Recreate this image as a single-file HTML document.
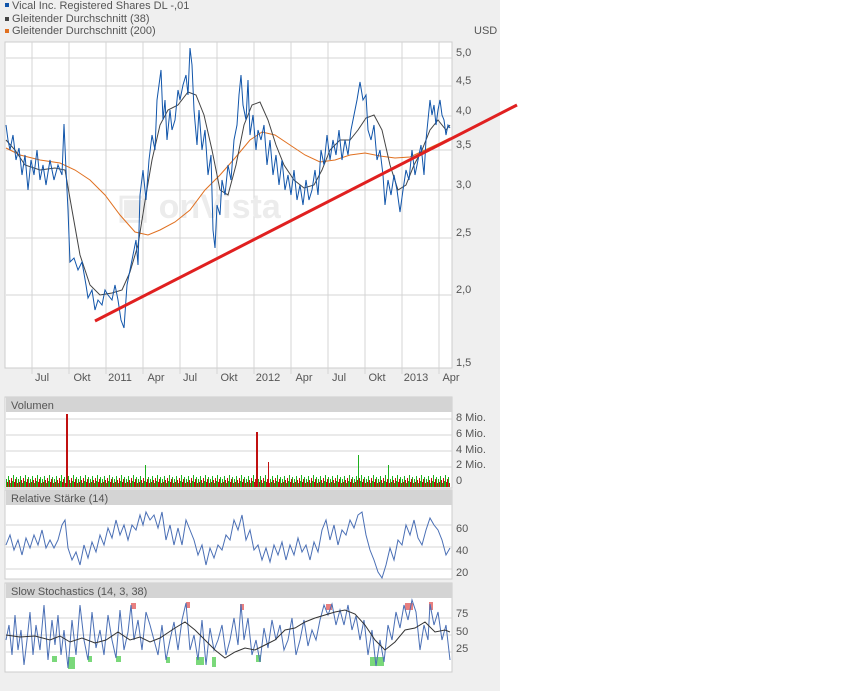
<!DOCTYPE html>
<html><head><meta charset="utf-8"><style>
body{margin:0;width:850px;height:691px;background:#fff;font-family:"Liberation Sans",sans-serif;overflow:hidden}
#g{position:absolute;left:0;top:0;width:500px;height:691px;background:#efefef}
svg{position:absolute;left:0;top:0}
text{font-family:"Liberation Sans",sans-serif;font-size:11px;fill:#555}
</style></head><body>
<div id="g"></div>
<svg width="850" height="691">
<defs>
<pattern id="vb" x="6" y="0" width="12" height="487" patternUnits="userSpaceOnUse">
<rect x="0" y="479" width="1" height="8" fill="#1db01d"/><rect x="1" y="482" width="1" height="5" fill="#c01010"/>
<rect x="2" y="476" width="1" height="11" fill="#1db01d"/><rect x="3" y="480" width="1" height="7" fill="#c01010"/>
<rect x="4" y="483" width="1" height="4" fill="#1db01d"/><rect x="5" y="478" width="1" height="9" fill="#c01010"/>
<rect x="6" y="481" width="1" height="6" fill="#1db01d"/><rect x="7" y="475" width="1" height="12" fill="#1db01d"/>
<rect x="8" y="482" width="1" height="5" fill="#c01010"/><rect x="9" y="479" width="1" height="8" fill="#c01010"/>
<rect x="10" y="477" width="1" height="10" fill="#1db01d"/><rect x="11" y="483" width="1" height="4" fill="#c01010"/>
</pattern>
</defs>
<!-- legend -->
<rect x="5" y="3" width="4" height="4" fill="#1155aa"/><text x="12" y="9">Vical Inc. Registered Shares DL -,01</text>
<rect x="5" y="17" width="4" height="4" fill="#444"/><text x="12" y="22">Gleitender Durchschnitt (38)</text>
<rect x="5" y="29" width="4" height="4" fill="#e07020"/><text x="12" y="34">Gleitender Durchschnitt (200)</text>
<text x="474" y="34">USD</text>
<!-- main panel -->
<rect x="5" y="42" width="447" height="326" fill="#fff" stroke="#ccc"/>
<g stroke="#d4d4d4" stroke-width="1">
<line x1="6" y1="58" x2="452" y2="58"/><line x1="6" y1="86" x2="452" y2="86"/><line x1="6" y1="116" x2="452" y2="116"/><line x1="6" y1="150" x2="452" y2="150"/><line x1="6" y1="190" x2="452" y2="190"/><line x1="6" y1="238" x2="452" y2="238"/><line x1="6" y1="295" x2="452" y2="295"/>
<line x1="32" y1="42" x2="32" y2="374"/><line x1="69" y1="42" x2="69" y2="374"/><line x1="106" y1="42" x2="106" y2="374"/><line x1="143" y1="42" x2="143" y2="374"/><line x1="180" y1="42" x2="180" y2="374"/><line x1="217" y1="42" x2="217" y2="374"/><line x1="254" y1="42" x2="254" y2="374"/><line x1="291" y1="42" x2="291" y2="374"/><line x1="328" y1="42" x2="328" y2="374"/><line x1="365" y1="42" x2="365" y2="374"/><line x1="402" y1="42" x2="402" y2="374"/><line x1="439" y1="42" x2="439" y2="374"/>
</g>
<text x="117" y="218" style="font-size:34px;fill:#ececec;font-weight:bold">▣ onVista</text>
<g text-anchor="start">
<text x="456" y="56">5,0</text><text x="456" y="84">4,5</text><text x="456" y="114">4,0</text><text x="456" y="148">3,5</text><text x="456" y="188">3,0</text><text x="456" y="236">2,5</text><text x="456" y="293">2,0</text><text x="456" y="366">1,5</text>
</g>
<g text-anchor="middle">
<text x="42" y="381">Jul</text><text x="82" y="381">Okt</text><text x="120" y="381">2011</text><text x="156" y="381">Apr</text><text x="190" y="381">Jul</text><text x="229" y="381">Okt</text><text x="268" y="381">2012</text><text x="304" y="381">Apr</text><text x="339" y="381">Jul</text><text x="377" y="381">Okt</text><text x="416" y="381">2013</text><text x="451" y="381">Apr</text>
</g>
<polyline fill="none" stroke="#e07020" stroke-width="1" points="6,148 20,155 40,160 60,163 75,170 90,180 105,195 120,215 135,232 148,235 160,230 175,222 190,210 205,190 220,175 235,158 250,140 262,132 275,135 290,145 305,155 320,162 335,160 350,155 365,153 380,156 395,158 410,157 425,150 440,143 450,138"/>
<polyline fill="none" stroke="#444" stroke-width="1" points="6,140 15,150 25,165 40,170 55,168 65,170 72,210 80,255 90,285 100,295 112,293 122,290 130,272 138,245 146,195 152,160 160,125 168,110 178,105 188,92 196,95 204,115 212,150 220,190 228,195 236,165 244,125 252,105 260,102 268,120 276,145 284,165 294,180 304,188 314,185 322,170 330,150 340,140 350,140 358,130 366,118 374,115 382,130 390,165 398,190 406,185 414,165 422,150 430,130 438,120 446,130 450,125"/>
<polyline fill="none" stroke="#1155aa" stroke-width="1" points="6,125 8,140 10,150 13,135 16,160 19,148 22,175 25,155 28,190 31,160 34,175 37,150 40,180 43,165 46,185 50,160 54,180 58,165 62,175 64,124 66,170 68,210 70,262 74,258 78,270 82,262 86,285 88,298 92,290 95,310 98,300 102,305 105,290 108,295 112,300 115,285 118,300 121,320 124,328 127,285 130,270 133,255 136,240 138,265 140,195 143,170 146,200 149,160 152,135 155,150 157,100 159,85 161,70 163,120 165,100 167,140 170,110 172,130 175,120 178,90 180,100 183,85 186,75 188,95 190,48 192,65 194,110 197,145 199,110 202,150 205,130 208,175 211,155 213,230 215,248 217,205 220,215 222,180 225,195 228,165 231,180 234,140 237,125 239,95 241,75 243,105 246,120 248,80 250,135 253,115 256,150 258,130 261,140 264,125 267,165 270,140 273,175 276,155 279,185 282,160 285,190 288,175 291,195 294,170 297,200 300,185 303,205 306,180 309,200 312,190 315,170 318,195 321,150 324,165 327,135 330,160 333,140 336,155 339,130 342,160 345,140 348,155 351,130 354,115 357,100 360,82 363,100 366,95 368,130 371,140 374,125 377,160 380,150 383,175 385,205 388,180 391,195 394,175 397,190 400,212 403,190 406,170 409,180 412,150 415,175 418,160 421,145 424,175 426,140 428,120 430,100 432,115 434,105 436,125 438,110 440,100 442,115 444,120 446,135 448,125 450,128"/>
<line x1="95" y1="321" x2="517" y2="105" stroke="#e02020" stroke-width="3"/>
<!-- volume -->
<rect x="5" y="397" width="447" height="91" fill="#fff" stroke="#ccc"/>
<rect x="6" y="397" width="446" height="15" fill="#d4d4d4"/>
<text x="11" y="409">Volumen</text>
<g stroke="#d4d4d4"><line x1="6" y1="419" x2="452" y2="419"/><line x1="6" y1="435" x2="452" y2="435"/><line x1="6" y1="451" x2="452" y2="451"/><line x1="6" y1="467" x2="452" y2="467"/></g>
<rect x="6" y="470" width="444" height="17" fill="url(#vb)"/>
<rect x="66" y="414" width="2" height="73" fill="#c01010"/><rect x="256" y="432" width="2" height="55" fill="#c01010"/>
<rect x="358" y="455" width="1" height="32" fill="#1db01d"/><rect x="388" y="465" width="1" height="22" fill="#1db01d"/><rect x="145" y="465" width="1" height="22" fill="#1db01d"/><rect x="268" y="462" width="1" height="25" fill="#c01010"/>
<text x="456" y="421">8 Mio.</text><text x="456" y="437">6 Mio.</text><text x="456" y="453">4 Mio.</text><text x="456" y="468">2 Mio.</text><text x="456" y="484">0</text>
<!-- RSI -->
<rect x="5" y="490" width="447" height="89" fill="#fff" stroke="#ccc"/>
<rect x="6" y="490" width="446" height="15" fill="#d4d4d4"/>
<text x="11" y="502">Relative Stärke (14)</text>
<g stroke="#d4d4d4"><line x1="6" y1="525" x2="452" y2="525"/><line x1="6" y1="547" x2="452" y2="547"/><line x1="6" y1="569" x2="452" y2="569"/></g>
<polyline fill="none" stroke="#4a6fb5" stroke-width="1" points="6,545 10,535 14,550 18,540 22,555 26,538 30,548 34,535 38,545 42,530 46,548 50,540 54,548 58,540 62,525 65,520 68,548 72,560 76,552 80,565 84,545 88,558 92,542 96,552 100,535 104,545 108,528 112,538 116,520 120,535 124,525 128,540 132,525 136,530 140,515 143,525 146,512 150,520 154,515 158,528 162,512 166,540 170,525 174,545 178,528 182,545 186,520 190,530 194,540 198,555 202,545 206,565 210,548 214,558 218,545 222,550 226,535 230,540 234,520 238,530 242,515 246,540 250,530 254,550 258,545 262,560 266,548 270,562 274,545 278,555 282,542 286,560 290,545 294,555 298,538 302,552 306,545 310,560 314,542 318,552 322,530 326,520 330,540 334,525 338,545 342,530 346,535 350,520 354,528 358,515 362,512 366,535 370,550 374,560 378,572 382,578 386,565 390,548 394,560 398,540 402,545 406,525 410,535 414,520 418,538 422,545 426,530 430,518 434,525 438,530 442,540 446,555 450,548"/>
<text x="456" y="532">60</text><text x="456" y="554">40</text><text x="456" y="576">20</text>
<!-- Stoch -->
<rect x="5" y="583" width="447" height="89" fill="#fff" stroke="#ccc"/>
<rect x="6" y="583" width="446" height="15" fill="#d4d4d4"/>
<text x="11" y="595">Slow Stochastics (14, 3, 38)</text>
<g stroke="#d4d4d4"><line x1="6" y1="618" x2="452" y2="618"/><line x1="6" y1="635" x2="452" y2="635"/><line x1="6" y1="652" x2="452" y2="652"/></g>
<g fill="#7ad87a"><rect x="52" y="656" width="5" height="6"/><rect x="68" y="657" width="7" height="12"/><rect x="88" y="656" width="4" height="6"/><rect x="116" y="656" width="5" height="6"/><rect x="166" y="657" width="4" height="6"/><rect x="196" y="657" width="8" height="8"/><rect x="212" y="657" width="4" height="10"/><rect x="256" y="655" width="5" height="7"/><rect x="370" y="657" width="14" height="9"/></g>
<g fill="#e88080"><rect x="186" y="602" width="4" height="6"/><rect x="131" y="603" width="5" height="6"/><rect x="240" y="604" width="4" height="6"/><rect x="326" y="604" width="6" height="6"/><rect x="405" y="603" width="8" height="7"/><rect x="429" y="602" width="4" height="8"/></g>
<polyline fill="none" stroke="#4a6fb5" stroke-width="1" points="6,640 9,625 12,655 15,615 18,650 21,630 24,665 27,640 30,612 33,655 36,625 40,650 44,605 48,660 52,620 55,645 58,615 61,655 64,630 68,668 72,620 76,655 80,605 84,640 88,660 92,612 96,648 100,630 104,655 108,615 112,640 116,658 120,610 124,650 128,632 131,605 134,640 138,620 142,650 146,612 150,625 154,640 158,655 162,625 166,660 170,640 174,622 178,650 182,620 186,603 190,650 194,635 198,660 202,620 206,665 210,628 214,650 218,640 222,625 226,655 230,640 234,618 238,645 241,604 244,640 248,618 252,655 256,640 260,662 264,628 268,648 272,620 276,640 280,625 284,650 288,640 292,618 296,655 300,640 304,620 308,646 312,630 316,640 320,620 324,605 328,615 332,604 336,625 340,610 344,625 348,605 352,630 356,616 360,640 364,620 368,655 372,630 376,666 380,640 384,662 388,625 392,640 396,612 400,628 404,605 408,620 412,600 416,612 420,650 424,625 428,640 430,604 434,625 438,612 442,640 446,625 450,660"/>
<polyline fill="none" stroke="#333" stroke-width="1" points="6,635 20,637 35,636 50,640 60,636 70,642 82,638 95,643 106,640 118,632 130,640 140,637 150,642 160,638 175,628 185,622 195,630 205,640 215,650 225,658 235,652 245,648 255,650 265,645 275,640 285,630 295,628 305,622 315,618 325,615 335,612 345,610 355,614 365,625 375,640 385,650 395,642 405,630 415,628 425,622 435,632 445,630 450,632"/>
<text x="456" y="617">75</text><text x="456" y="635">50</text><text x="456" y="652">25</text>
</svg>
</body></html>
